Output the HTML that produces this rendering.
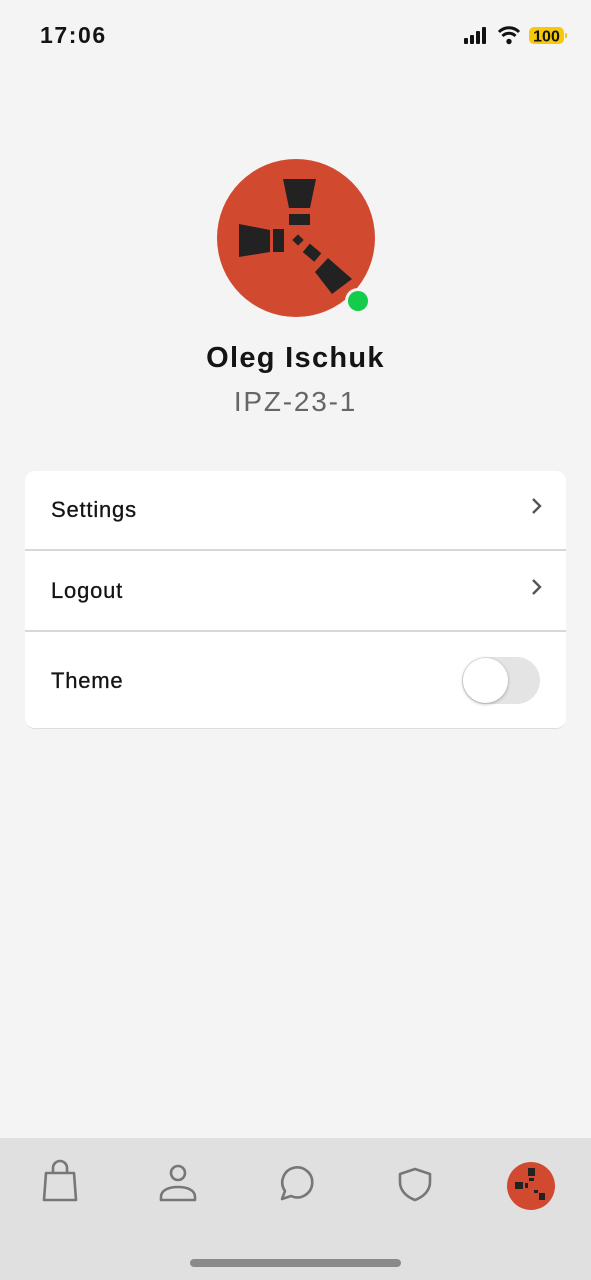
<!DOCTYPE html>
<html><head><meta charset="utf-8"><style>
*{margin:0;padding:0;box-sizing:border-box}
body{width:591px;height:1280px;background:#f4f4f4;font-family:"Liberation Sans",sans-serif;position:relative;overflow:hidden;color:#141414}
.abs{position:absolute}
.time{left:40px;top:22px;font-size:23px;font-weight:bold;letter-spacing:1.6px}
.card{left:25px;top:471px;width:541px;height:258px;background:#fff;border-radius:10px;border-bottom:1px solid #ddd}
.row{position:absolute;left:0;width:541px;font-size:22px;letter-spacing:0.8px;-webkit-text-stroke:0.3px #141414}
.sep{position:absolute;left:0;width:541px;height:1.5px;background:#d8d8d8}
.row span{position:absolute;left:26px}
.chev{position:absolute;right:24px}
</style></head><body>
<div class="abs time">17:06</div>
<svg class="abs" style="left:462px;top:24px" width="108" height="24" viewBox="0 0 108 24">
<rect x="2" y="14" width="4" height="6" rx="1" fill="#111"/><rect x="8" y="11" width="4" height="9" rx="1" fill="#111"/><rect x="14" y="7" width="4" height="13" rx="1" fill="#111"/><rect x="20" y="3" width="4" height="17" rx="1" fill="#111"/>
<path d="M37 8a14 14 0 0 1 20 0" stroke="#111" stroke-width="3" fill="none"/><path d="M40.5 12a9 9 0 0 1 13 0" stroke="#111" stroke-width="3" fill="none"/><circle cx="47" cy="17.5" r="2.7" fill="#111"/>
<rect x="67" y="3" width="35" height="17" rx="5" fill="#f7c90a"/><rect x="103" y="9" width="2" height="5" rx="1" fill="#f7c90a"/>
<text x="84.5" y="17.5" font-family="Liberation Sans" font-weight="bold" font-size="16" text-anchor="middle" fill="#111">100</text>
</svg>
<svg class="abs" style="left:210px;top:152px" width="172" height="172" viewBox="210 152 172 172">
<circle cx="296" cy="238" r="79" fill="#d14a30"/>
<polygon points="283,179 316,179 310,208 289,208" fill="#222"/>
<rect x="289" y="214" width="21" height="11" fill="#222"/>
<polygon points="239,224 270,230 270,252 239,257" fill="#222"/>
<rect x="273" y="229" width="11" height="23" fill="#222"/>
<rect x="294" y="236" width="8" height="8" fill="#222" transform="rotate(45 298 240)"/>
<rect x="305" y="247" width="15" height="11" fill="#222" transform="rotate(40 312 252)"/>
<polygon points="328,258 352,279 332,294 315,272" fill="#222"/>
<circle cx="358" cy="301" r="13" fill="#f4f4f4"/><circle cx="358" cy="301" r="10" fill="#13cc4a"/>
</svg>
<div class="abs" style="left:0;width:591px;top:342px;text-align:center;font-size:29px;font-weight:bold;letter-spacing:1.3px">Oleg Ischuk</div>
<div class="abs" style="left:0;width:591px;top:386px;text-align:center;font-size:28px;color:#666;letter-spacing:1.8px">IPZ-23-1</div>
<div class="abs card">
<div class="row" style="top:26px"><span>Settings</span><svg class="chev" width="12" height="18" viewBox="0 0 12 18"><path d="M3 2l7 7-7 7" stroke="#555" stroke-width="2.4" fill="none"/></svg></div>
<div class="sep" style="top:78px"></div>
<div class="row" style="top:107px"><span>Logout</span><svg class="chev" width="12" height="18" viewBox="0 0 12 18"><path d="M3 2l7 7-7 7" stroke="#555" stroke-width="2.4" fill="none"/></svg></div>
<div class="sep" style="top:159px"></div>
<div class="row" style="top:197px"><span>Theme</span></div>
<div style="position:absolute;left:437px;top:186px;width:78px;height:47px;border-radius:24px;background:#e4e4e4"></div>
<div style="position:absolute;left:438px;top:187px;width:45px;height:45px;border-radius:50%;background:#fff;box-shadow:0 1px 3px rgba(0,0,0,.3)"></div>
</div>
<div class="abs" style="left:0;top:1138px;width:591px;height:142px;background:#e0e0e0"></div>
<svg class="abs" style="left:0;top:1138px" width="591" height="142" viewBox="0 1138 591 142">
<g stroke="#777" stroke-width="2.6" fill="none" stroke-linejoin="round">
<path d="M46 1173h28l2 27h-32z"/><path d="M53 1173v-5a7 7 0 0 1 14 0v5"/>
<circle cx="178" cy="1173" r="7"/><path d="M161 1200v-3c0-7 8-10 17-10s17 3 17 10v3z"/>
<path d="M282 1199l3-8a15 15 0 1 1 6 5z"/>
<path d="M415 1169l15 5v8c0 9-7 15-15 18-8-3-15-9-15-18v-8z"/>
</g>
<circle cx="531" cy="1186" r="24" fill="#d14a30"/>
<g fill="#222"><rect x="528" y="1168" width="7" height="8"/><rect x="529" y="1178" width="5" height="3"/><rect x="515" y="1182" width="8" height="7"/><rect x="525" y="1183" width="3" height="5"/><rect x="534" y="1190" width="4" height="3"/><rect x="539" y="1193" width="6" height="7"/></g>
<rect x="190" y="1259" width="211" height="8" rx="4" fill="#8a8a8a"/>
</svg>
</body></html>
